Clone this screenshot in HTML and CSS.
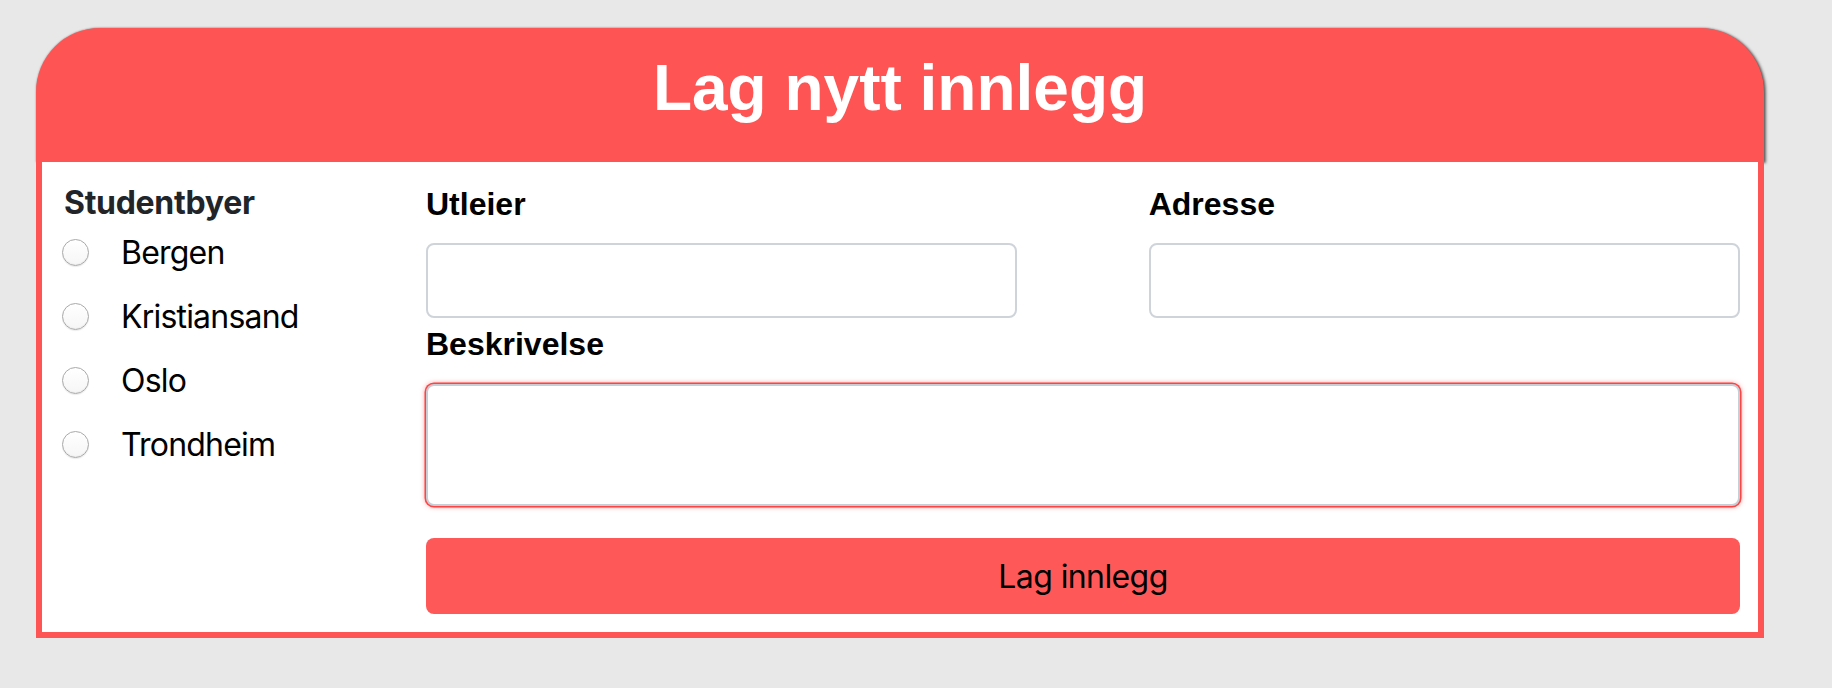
FILE: index.html
```html
<!DOCTYPE html>
<html lang="no">
<head>
<meta charset="utf-8">
<title>Lag nytt innlegg</title>
<link rel="stylesheet" href="styles.css">
</head>
<body>
<div class="card">
  <div class="card-header">
    <h1 class="title">Lag nytt innlegg</h1>
  </div>
  <form class="card-body">
    <div class="cities">
      <h5 class="cities-title">Studentbyer</h5>
      <label class="city"><input type="radio" name="by" class="radio"><span>Bergen</span></label>
      <label class="city"><input type="radio" name="by" class="radio"><span>Kristiansand</span></label>
      <label class="city"><input type="radio" name="by" class="radio"><span>Oslo</span></label>
      <label class="city"><input type="radio" name="by" class="radio"><span>Trondheim</span></label>
    </div>
    <div class="fields">
      <div class="row">
        <div class="field">
          <label class="label">Utleier</label>
          <input type="text" class="input">
        </div>
        <div class="field">
          <label class="label">Adresse</label>
          <input type="text" class="input">
        </div>
      </div>
      <label class="label label-desc">Beskrivelse</label>
      <textarea class="textarea"></textarea>
      <button type="button" class="submit">Lag innlegg</button>
    </div>
  </form>
</div>
</body>
</html>
```
FILE: styles.css
```css
* {
  box-sizing: border-box;
}

body {
  margin: 0;
  background: #e8e8e8;
  padding: 28px 0 0 36px;
  font-family: "Inter", "Noto Sans", sans-serif;
}

.card {
  width: 1728px;
}

.card-header {
  height: 134px;
  background: #ff5454;
  border-radius: 64px 64px 0 0;
  box-shadow: 0 0 2px rgba(0, 0, 0, 0.35), 2px 1px 3px rgba(0, 0, 0, 0.55);
  display: flex;
  align-items: center;
  justify-content: center;
  padding-bottom: 14px;
}

.title {
  margin: 0;
  font-family: "Liberation Sans", Arial, sans-serif;
  font-weight: 700;
  font-size: 64px;
  color: #ffffff;
  line-height: normal;
}

.card-body {
  margin: 0;
  background: #ffffff;
  border: 6px solid #ff5454;
  border-top: 0;
  display: flex;
  height: 476px;
}

.cities {
  width: 384px;
  flex: none;
  padding: 22px 0 0 22px;
}

.cities-title {
  margin: 0;
  font-size: 32px;
  font-weight: 700;
  line-height: 38px;
  color: #212529;
  letter-spacing: -0.3px;
}

.city {
  display: flex;
  align-items: center;
  height: 64px;
  font-size: 32px;
  color: #000;
  letter-spacing: -0.8px;
  padding-bottom: 4px;
}

.radio {
  appearance: none;
  -webkit-appearance: none;
  margin: 0 32px 0 -2px;
  width: 27px;
  height: 27px;
  border-radius: 50%;
  border: 1px solid #a9a9a9;
  background: linear-gradient(#ffffff, #f6f6f6);
  box-shadow: inset 0 -1px 1px rgba(0, 0, 0, 0.05), 0 1px 1px rgba(0, 0, 0, 0.08);
  flex: none;
}

.fields {
  flex: 1;
  padding: 22px 18px 17px 0;
  display: flex;
  flex-direction: column;
}

.row {
  display: flex;
  justify-content: space-between;
}

.field {
  width: 45%;
  display: flex;
  flex-direction: column;
}

.label {
  display: block;
  font-family: "Liberation Sans", Arial, sans-serif;
  font-weight: 700;
  font-size: 32px;
  line-height: 40px;
  color: #000;
  margin-bottom: 19px;
}

.input {
  width: 100%;
  height: 75px;
  border: 2px solid #ced4da;
  border-radius: 8px;
  background: #fff;
  margin: 0;
}

.label-desc {
  margin-top: 6px;
  margin-bottom: 20px;
}

.textarea {
  width: 100%;
  height: 122px;
  border: 2px solid #c8ced6;
  border-radius: 8px;
  resize: none;
  margin: 0;
  box-shadow: 0 0 0 1.5px rgba(255, 60, 60, 0.95), 0 0 5px 1px rgba(255, 60, 60, 0.55);
  outline: none;
}

.submit {
  margin-top: 32px;
  width: 100%;
  height: 76px;
  background: #ff5858;
  border: 0;
  border-radius: 8px;
  font-family: "Inter", "Noto Sans", sans-serif;
  font-size: 32px;
  letter-spacing: -0.6px;
  color: #000;
  padding: 0;
}
```
